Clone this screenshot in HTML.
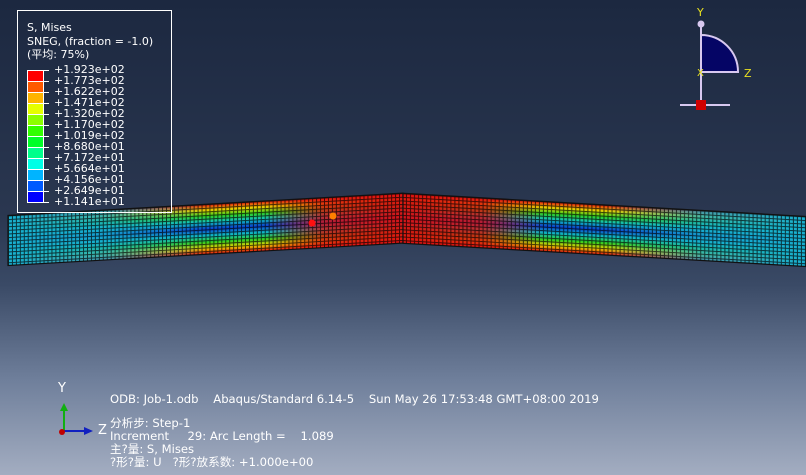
<!DOCTYPE html>
<html><head><meta charset="utf-8"><style>
html,body{margin:0;padding:0;}
body{width:806px;height:475px;overflow:hidden;background:linear-gradient(180deg,#1c2840 0%,#2a3750 45%,#3a4a66 60%,#6f7f9b 80%,#a3adc1 100%);font-family:"DejaVu Sans","Noto Sans CJK SC",sans-serif;color:#fff;position:relative;}
.t{position:absolute;font-size:11px;white-space:pre;line-height:13px;color:#fff;}
.b{font-size:11.6px;}
</style></head><body>
<svg width="806" height="475" style="position:absolute;left:0;top:0">
<defs>
<linearGradient id="th" x1="0" y1="0" x2="0" y2="1">
<stop offset="0" stop-color="#e81010"/><stop offset="0.12" stop-color="#e8d000"/><stop offset="0.24" stop-color="#30d020"/><stop offset="0.36" stop-color="#10c0c0"/><stop offset="0.5" stop-color="#0840d0"/><stop offset="0.64" stop-color="#10c0c0"/><stop offset="0.76" stop-color="#30d020"/><stop offset="0.88" stop-color="#e8d000"/><stop offset="1" stop-color="#e81010"/>
</linearGradient>
<linearGradient id="ends" x1="0" y1="0" x2="1" y2="0">
<stop offset="0" stop-color="#18b0d0" stop-opacity="1"/><stop offset="0.25" stop-color="#18b0d0" stop-opacity="0.8"/><stop offset="0.5" stop-color="#18b0d0" stop-opacity="0"/><stop offset="1" stop-color="#18b0d0" stop-opacity="0"/>
</linearGradient>
<linearGradient id="red" x1="0" y1="0" x2="1" y2="0">
<stop offset="0.65" stop-color="#e01010" stop-opacity="0"/><stop offset="0.8" stop-color="#e01010" stop-opacity="0.8"/><stop offset="1" stop-color="#e01010" stop-opacity="0.95"/>
</linearGradient>
<pattern id="grid" width="4" height="3.6" patternUnits="userSpaceOnUse">
<path d="M0 0.5H4M0.5 0V3.6" stroke="#000" stroke-width="1" opacity="0.7" fill="none"/>
</pattern>
<g id="half">
<rect x="0" y="0" width="400" height="50" fill="url(#th)"/>
<rect x="0" y="0" width="400" height="50" fill="url(#ends)"/>
<rect x="0" y="0" width="400" height="50" fill="url(#red)"/>
<rect x="0" y="0" width="400" height="50" fill="url(#grid)"/>
<rect x="0" y="0" width="400" height="50" fill="none" stroke="#111" stroke-width="1.2"/>
</g>
</defs>
<use href="#half" transform="matrix(0.9875,-0.056,0,1,8,215.5)"/>
<use href="#half" transform="matrix(-1.0075,-0.058,0,1,806,216.5)"/>
<circle cx="312" cy="223" r="3.5" fill="#ff1010"/>
<circle cx="333" cy="216" r="3.5" fill="#ff8000"/>
<rect x="17.5" y="10.5" width="154" height="202" fill="none" stroke="#fff" stroke-width="1"/>
<g>
<rect x="28" y="71" width="15" height="11" fill="#ff0000"/>
<rect x="28" y="82" width="15" height="11" fill="#ff5a00"/>
<rect x="28" y="93" width="15" height="11" fill="#ffb400"/>
<rect x="28" y="104" width="15" height="11" fill="#e6ff00"/>
<rect x="28" y="115" width="15" height="11" fill="#8cff00"/>
<rect x="28" y="126" width="15" height="11" fill="#32ff00"/>
<rect x="28" y="137" width="15" height="11" fill="#00ff28"/>
<rect x="28" y="148" width="15" height="11" fill="#00ff8c"/>
<rect x="28" y="159" width="15" height="11" fill="#00ffe6"/>
<rect x="28" y="170" width="15" height="11" fill="#00b4ff"/>
<rect x="28" y="181" width="15" height="11" fill="#005aff"/>
<rect x="28" y="192" width="15" height="11" fill="#0000ff"/>
</g>
<g stroke="#fff" stroke-width="1" fill="none">
<rect x="27.5" y="70.5" width="16" height="132"/>
<path d="M27 81.5H44M27 92.5H44M27 103.5H44M27 114.5H44M27 125.5H44M27 136.5H44M27 147.5H44M27 158.5H44M27 169.5H44M27 180.5H44M27 191.5H44"/>
<path d="M43 70.5H49M43 81.5H49M43 92.5H49M43 103.5H49M43 114.5H49M43 125.5H49M43 136.5H49M43 147.5H49M43 158.5H49M43 169.5H49M43 180.5H49M43 191.5H49M43 202.5H49"/>
</g>
<line x1="701" y1="24" x2="701" y2="105" stroke="#d8c8f0" stroke-width="2"/>
<path d="M701 35 A37 37 0 0 1 738 72 L701 72 Z" fill="#050565" stroke="#d8c8f0" stroke-width="2"/>
<circle cx="701" cy="24" r="3.5" fill="#d8c8f0"/>
<line x1="680" y1="105" x2="730" y2="105" stroke="#d8c8f0" stroke-width="2"/>
<rect x="696" y="100" width="10" height="10" fill="#d00000"/>
<text x="697" y="16" fill="#e8e020" font-size="11" font-family="DejaVu Sans">Y</text>
<text x="697" y="76" fill="#e8e020" font-size="10" font-family="DejaVu Sans">X</text>
<text x="744" y="77" fill="#e8e020" font-size="11" font-family="DejaVu Sans">Z</text>
<line x1="64" y1="432" x2="64" y2="409" stroke="#10b010" stroke-width="2"/>
<path d="M60 411 L64 403 L68 411 Z" fill="#10b010"/>
<line x1="64" y1="431" x2="86" y2="431" stroke="#1020c0" stroke-width="2"/>
<path d="M84 427 L93 431 L84 435 Z" fill="#1020c0"/>
<circle cx="62" cy="432" r="3" fill="#c00000"/>
</svg>
<div class="t" style="left:27px;top:21px">S, Mises</div>
<div class="t" style="left:27px;top:35px">SNEG, (fraction = -1.0)</div>
<div class="t" style="left:27px;top:48px">(平均: 75%)</div>
<div class="t" style="left:54px;top:64px;line-height:11px;font-size:11px">+1.923e+02
+1.773e+02
+1.622e+02
+1.471e+02
+1.320e+02
+1.170e+02
+1.019e+02
+8.680e+01
+7.172e+01
+5.664e+01
+4.156e+01
+2.649e+01
+1.141e+01</div>
<div class="t" style="left:58px;top:382px;font-size:13px">Y</div>
<div class="t" style="left:98px;top:424px;font-size:13px">Z</div>
<div class="t b" style="left:110px;top:393px">ODB: Job-1.odb    Abaqus/Standard 6.14-5    Sun May 26 17:53:48 GMT+08:00 2019</div>
<div class="t b" style="left:110px;top:417px">分析步: Step-1
Increment     29: Arc Length =    1.089
主?量: S, Mises
?形?量: U   ?形?放系数: +1.000e+00</div>
</body></html>
